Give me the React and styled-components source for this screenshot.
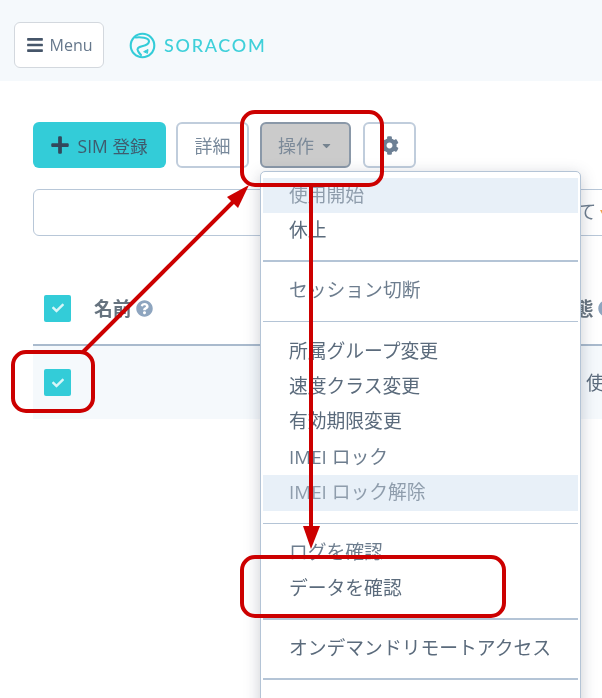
import React from 'react'
import styled, { createGlobalStyle } from 'styled-components'
import { FaBars, FaPlus, FaCog, FaQuestionCircle, FaCheck, FaCaretDown } from 'react-icons/fa'

const GlobalStyle = createGlobalStyle`
    html, body{
        margin: 0;
        padding: 0;
        background: #fff;
    }
    *{
        box-sizing: border-box;
    }
`;

const MENU_GROUPS = [
    [
        { label: '使用開始', muted: true, active: true },
        { label: '休止' },
    ],
    [
        { label: 'セッション切断', soft: true },
    ],
    [
        { label: '所属グループ変更' },
        { label: '速度クラス変更' },
        { label: '有効期限変更' },
        { label: 'IMEI ロック', soft: true },
        { label: 'IMEI ロック解除', muted: true, active: true },
    ],
    [
        { label: 'ログを確認', soft: true },
        { label: 'データを確認' },
    ],
    [
        { label: 'オンデマンドリモートアクセス' },
    ],
];

function Check() {
    return (
        <CheckBox>
            <FaCheck />
        </CheckBox>
    )
}

function Logo() {
    return (
        <svg width="27" height="27" viewBox="0 0 27 27" fill="none" stroke="#33ccd8" strokeWidth="2.1" strokeLinecap="round">
            <circle cx="13.5" cy="13.5" r="11.8" />
            <path d="M7 5.5 C11 5 20 5.5 20 9.5 C20 12.5 16 13.5 13 14.2 C9.5 15 7.5 16.5 9 19 C10 21 11 22 12 23" />
            <path d="M15 19.5 L19 17.5 L18.5 21 Z" fill="#33ccd8" strokeWidth="1" />
        </svg>
    )
}

function App() {
    return (
        <Page>
            <GlobalStyle />
            <Header>
                <MenuButton>
                    <FaBars />
                    Menu
                </MenuButton>
                <Brand>
                    <Logo />
                    <Wordmark>SORACOM</Wordmark>
                </Brand>
            </Header>

            <Content>
                <Toolbar>
                    <PrimaryButton>
                        <FaPlus />
                        SIM 登録
                    </PrimaryButton>
                    <ToolButton $width={73}>詳細</ToolButton>
                    <DropdownWrap>
                        <ActionButton>
                            操作
                            <FaCaretDown />
                        </ActionButton>
                        <Dropdown>
                            {MENU_GROUPS.map((group, i) => (
                                <React.Fragment key={i}>
                                    {group.map((item) => (
                                        <MenuItem key={item.label} $muted={item.muted} $soft={item.soft} $active={item.active}>
                                            {item.label}
                                        </MenuItem>
                                    ))}
                                    <Divider />
                                </React.Fragment>
                            ))}
                        </Dropdown>
                    </DropdownWrap>
                    <ToolButton $width={53}>
                        <FaCog />
                    </ToolButton>
                </Toolbar>

                <SearchBox>
                    すべて<Orange>▾</Orange>
                </SearchBox>

                <TableHead>
                    <Check />
                    <HeadLabel>名前<FaQuestionCircle /></HeadLabel>
                    <HeadLabel>状態<FaQuestionCircle /></HeadLabel>
                </TableHead>
                <TableRow>
                    <Check />
                    <Cell>使用中</Cell>
                </TableRow>
            </Content>

            <Callout $top={110} $left={240} $width={144} $height={77} />
            <Callout $top={350} $left={11} $width={84} $height={63} />
            <Callout $top={555} $left={240} $width={266} $height={63} />
            <Arrows width="602" height="698" viewBox="0 0 602 698">
                <path d="M83 352 L236 199" stroke="#cc0000" strokeWidth="4" fill="none" />
                <path d="M249 185 L227 197 L238 208 Z" fill="#cc0000" />
                <path d="M311 187 L311 530" stroke="#cc0000" strokeWidth="4" fill="none" />
                <path d="M311 549 L303 526 L320 526 Z" fill="#cc0000" />
            </Arrows>
        </Page>
    )
}

const Page = styled.div`
    position: relative;
    width: 602px;
    height: 698px;
    overflow: hidden;
    background: #fff;
    color: #5b6b7c;
    font-family: "Open Sans", "Noto Sans CJK JP", sans-serif;
    font-size: 18.8px;
    filter: blur(.35px);
`;

const Header = styled.header`
    height: 81px;
    background: #f5f9fc;
    padding: 22px 14px 0;
    display: flex;
    align-items: flex-start;
    gap: 25px;
`;

const MenuButton = styled.div`
    width: 90px;
    height: 46px;
    background: #fff;
    border: 1.5px solid #d3d8de;
    border-radius: 6px;
    display: flex;
    align-items: center;
    justify-content: center;
    gap: 6px;
    font-size: 16px;
    color: #66788c;
    svg{
        color: #46566a;
        font-size: 18px;
    }
`;

const Brand = styled.div`
    display: flex;
    align-items: center;
    gap: 8px;
    height: 46px;
`;

const Wordmark = styled.span`
    font-family: "Lato", sans-serif;
    font-size: 18px;
    font-weight: 500;
    letter-spacing: 1.7px;
    color: #3fd0da;
`;

const Content = styled.main`
    padding: 41px 0 0 33px;
`;

const Toolbar = styled.div`
    display: flex;
    align-items: flex-start;
    gap: 10px;
`;

const PrimaryButton = styled.div`
    width: 133px;
    height: 46px;
    background: #33ccd8;
    border-radius: 6px;
    display: flex;
    align-items: center;
    justify-content: center;
    gap: 8px;
    padding-right: 2px;
    color: #3f5c6e;
    font-size: 17.5px;
    svg{
        color: #33485c;
        font-size: 20px;
    }
`;

const ToolButton = styled.div`
    width: ${(p) => p.$width}px;
    height: 46px;
    margin-right: ${(p) => (p.$width === 73 ? 1 : 0)}px;
    background: #fff;
    border: 2px solid #c0cddc;
    border-radius: 6px;
    display: flex;
    align-items: center;
    justify-content: center;
    color: #78899b;
    font-size: 18px;
    svg{
        color: #6d8095;
        font-size: 19px;
    }
`;

const DropdownWrap = styled.div`
    position: relative;
    margin-right: 2px;
`;

const ActionButton = styled.div`
    width: 91px;
    height: 46px;
    background: #cbcbcb;
    border: 2px solid #8a98a8;
    border-radius: 6px;
    display: flex;
    align-items: center;
    justify-content: center;
    gap: 6px;
    color: #7c8a99;
    font-size: 18px;
    svg{
        font-size: 13px;
        color: #75838f;
    }
`;

const Dropdown = styled.div`
    position: absolute;
    top: 49px;
    left: 0;
    width: 321px;
    padding: 6px 2px 60px;
    background: #fff;
    border: 1.5px solid #b4c4d6;
    border-radius: 5px;
    box-shadow: 0 4px 16px rgba(60, 70, 90, .28);
    z-index: 2;
`;

const MenuItem = styled.div`
    height: 35.4px;
    padding: 0 0 4px 26px;
    display: flex;
    align-items: center;
    background: ${(p) => (p.$active ? '#e8f0f8' : 'transparent')};
    color: ${(p) => (p.$muted ? '#8f9dac' : p.$soft ? '#6d7d8e' : '#5b6b7c')};
`;

const Divider = styled.hr`
    height: 1.5px;
    margin: 11.7px 0;
    border: 0;
    background: #b4c4d6;
`;

const SearchBox = styled.div`
    width: 640px;
    height: 47px;
    margin-top: 21px;
    padding-left: 508px;
    padding-bottom: 3px;
    border: 1.5px solid #b8c7d8;
    border-radius: 6px;
    display: flex;
    align-items: center;
    color: #6d7d8e;
    white-space: nowrap;
`;

const Orange = styled.span`
    margin-left: 4px;
    color: #eea24a;
    font-size: 14px;
`;

const TableHead = styled.div`
    width: 640px;
    height: 110px;
    padding: 58px 0 0 11px;
    border-bottom: 2px solid #a9bacd;
    display: grid;
    grid-template-columns: 50px 462px auto;
    align-items: center;
    align-content: start;
`;

const HeadLabel = styled.div`
    display: flex;
    align-items: center;
    gap: 4px;
    font-weight: 700;
    color: #66737f;
    svg{
        color: #8ea5bf;
        font-size: 17px;
    }
`;

const CheckBox = styled.div`
    width: 27px;
    height: 27px;
    background: #33ccd8;
    border-radius: 2px;
    display: flex;
    align-items: center;
    justify-content: center;
    svg{
        color: #d8f6f8;
        font-size: 12px;
    }
`;

const TableRow = styled.div`
    width: 640px;
    height: 73px;
    padding-left: 11px;
    background: #f5f9fc;
    display: grid;
    grid-template-columns: 543px auto;
    align-items: center;
`;

const Cell = styled.div`
    color: #5b6b7c;
    white-space: nowrap;
    margin-top: -2px;
    margin-left: -1px;
`;

const Callout = styled.div`
    position: absolute;
    top: ${(p) => p.$top}px;
    left: ${(p) => p.$left}px;
    width: ${(p) => p.$width}px;
    height: ${(p) => p.$height}px;
    border: 4px solid #cc0000;
    border-radius: 15px;
    z-index: 3;
`;

const Arrows = styled.svg`
    position: absolute;
    top: 0;
    left: 0;
    z-index: 3;
    pointer-events: none;
`;

export default App
